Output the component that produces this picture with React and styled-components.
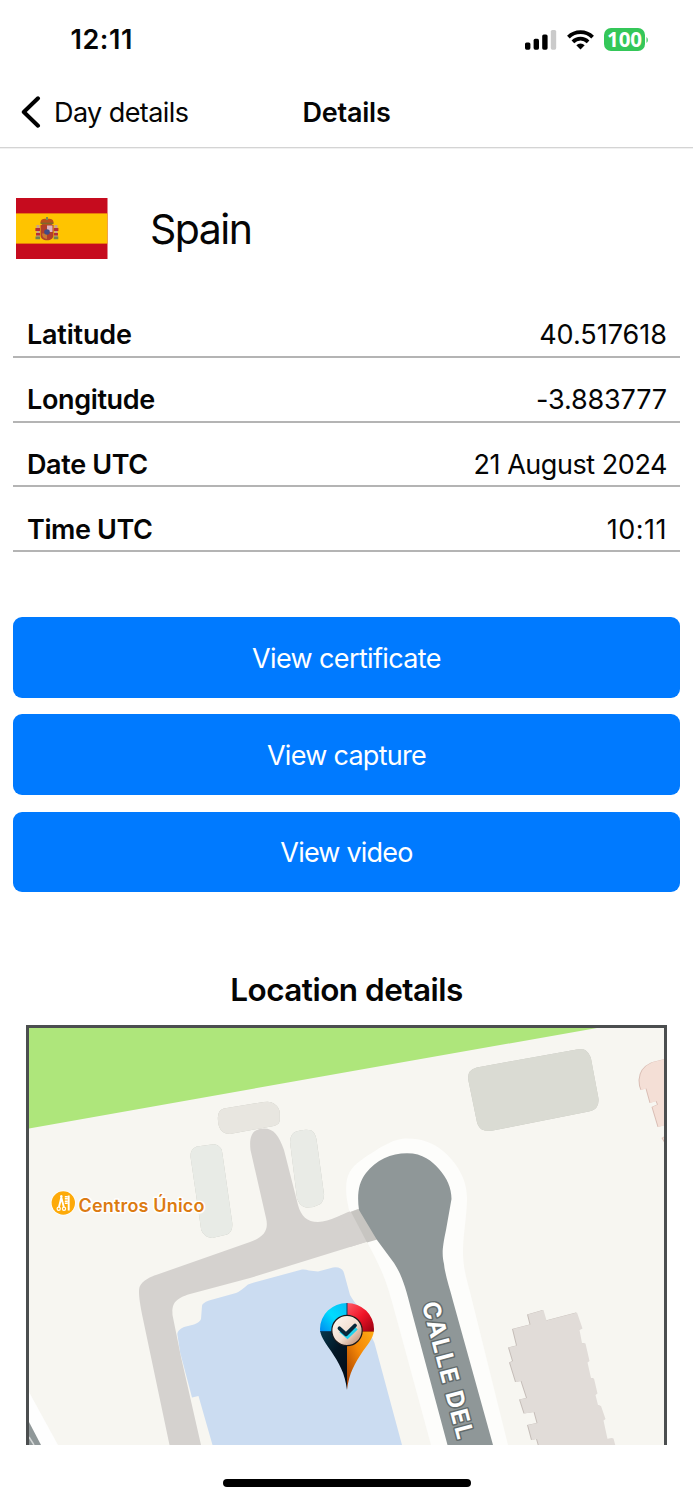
import React from 'react';
import styled, { createGlobalStyle } from 'styled-components';

const GlobalStyle = createGlobalStyle`
  body {
    margin: 0;
    background: #fff;
  }
`;

const Screen = styled.main`
  display: flex;
  flex-direction: column;
  width: 693px;
  height: 1500px;
  overflow: hidden;
  background: #fff;
  color: #050505;
  font-family: Inter, 'Liberation Sans', sans-serif;
  font-size: 27px;
  box-sizing: border-box;
`;

const StatusBar = styled.div`
  display: flex;
  flex: none;
  justify-content: space-between;
  align-items: center;
  height: 79px;
  padding: 0 44px 0 70.5px;
  box-sizing: border-box;
`;

const Clock = styled.span`
  font-weight: 600;
  font-size: 27px;
  letter-spacing: ${({ $tracking }) => $tracking}px;
`;

const StatusIcons = styled.div`
  display: flex;
  align-items: center;
  gap: 10px;
`;

const Battery = styled.div`
  display: flex;
  align-items: center;
  gap: 1px;
`;

const BatteryLevel = styled.span`
  width: 41px;
  height: 23px;
  border-radius: 7px;
  background: #34c759;
  color: #fff;
  font-family: 'Open Sans', sans-serif;
  font-size: 20.5px;
  font-weight: 700;
  line-height: 22px;
  text-align: center;
`;

const NavBar = styled.nav`
  display: grid;
  flex: none;
  grid-template-columns: 1fr auto 1fr;
  align-items: center;
  height: 69px;
  padding: 1px 21px 3px;
  border-bottom: 1px solid #d4d4d4;
  box-shadow: 0 1px #f1f1f1;
  box-sizing: border-box;
`;

const BackButton = styled.button`
  display: flex;
  align-items: center;
  gap: 13px;
  padding: 0;
  border: 0;
  background: none;
  color: inherit;
  font: inherit;
  letter-spacing: ${({ $tracking }) => $tracking}px;
`;

const NavTitle = styled.h1`
  margin: 0;
  font-size: 27px;
  font-weight: 600;
  letter-spacing: ${({ $tracking }) => $tracking}px;
`;

const CountryRow = styled.section`
  display: flex;
  flex: none;
  align-items: center;
  gap: 42px;
  height: 61px;
  padding: 50px 16px 0;
`;

const CountryName = styled.span`
  font-size: 41px;
  letter-spacing: ${({ $tracking }) => $tracking}px;
`;

const DataList = styled.dl`
  flex: none;
  margin: 34px 13px 0;
`;

const DataRow = styled.div`
  display: flex;
  justify-content: space-between;
  align-items: flex-end;
  height: 64.8px;
  padding: 0 13px 3.6px 14px;
  border-bottom: 2px solid #b4b4b4;
  box-sizing: border-box;
  line-height: 34px;
`;

const Label = styled.dt`
  font-weight: 600;
  letter-spacing: ${({ $tracking }) => $tracking}px;
`;

const Value = styled.dd`
  margin: 0;
  letter-spacing: ${({ $tracking }) => $tracking}px;
`;

const Actions = styled.section`
  display: flex;
  flex: none;
  flex-direction: column;
  gap: 16.4px;
  margin: 65px 13px 0;
`;

const ActionButton = styled.button`
  height: 80.8px;
  padding: 2px 0 0;
  border: 0;
  border-radius: 9px;
  background: #007aff;
  color: #fff;
  font: inherit;
  letter-spacing: ${({ $tracking }) => $tracking}px;
`;

const SectionTitle = styled.h2`
  flex: none;
  margin: 78px 0 16px;
  font-size: 31.5px;
  font-weight: 600;
  line-height: 39px;
  letter-spacing: ${({ $tracking }) => $tracking}px;
  text-align: center;
`;

const MapFrame = styled.section`
  flex: none;
  height: 420px;
  margin: 0 26px;
  border: 3px solid #4b4e4f;
  border-bottom: 0;
  box-sizing: border-box;
  overflow: hidden;

  > svg {
    display: block;
  }
`;

const Plots = styled.g`
  filter: drop-shadow(${({ $x }) => $x}px 0.8px 0 ${({ $shade }) => $shade});
`;

const HomeIndicator = styled.div`
  flex: none;
  width: 248px;
  height: 8px;
  margin: 34px auto 0;
  border-radius: 4px;
  background: #000;
`;

const rows = [
  { label: 'Latitude', value: '40.517618', labelTracking: -0.2, valueTracking: 0 },
  { label: 'Longitude', value: '-3.883777', labelTracking: -0.36, valueTracking: -0.15 },
  { label: 'Date UTC', value: '21 August 2024', labelTracking: -0.38, valueTracking: -0.45 },
  { label: 'Time UTC', value: '10:11', labelTracking: -0.4, valueTracking: 0.5 },
];

const actions = [
  { text: 'View certificate', tracking: -0.63 },
  { text: 'View capture', tracking: -0.72 },
  { text: 'View video', tracking: -0.8 },
];

const SignalIcon = () => (
  <svg width="32" height="20" viewBox="0 0 32 20">
    <rect x="0" y="12.5" width="5.4" height="7.2" rx="1.6" />
    <rect x="8.6" y="8.8" width="5.4" height="10.9" rx="1.6" />
    <rect x="17.2" y="4.4" width="5.4" height="15.3" rx="1.6" />
    <rect x="25.8" y="0" width="5.4" height="19.7" rx="1.6" fill="#cacaca" />
  </svg>
);

const WifiIcon = () => (
  <svg width="27" height="20" viewBox="0 0 27 20">
    <g fill="none" stroke="#000" strokeWidth="3.8">
      <path d="M1.4 7.1a17.2 17.2 0 0 1 24.2 0" />
      <path d="M5.9 11.8a10.8 10.8 0 0 1 15.2 0" />
    </g>
    <path d="M9.3 15.3a6.1 6.1 0 0 1 8.4 0l-4.2 4.3z" />
  </svg>
);

const BackIcon = () => (
  <svg width="20" height="32" viewBox="0 0 20 32">
    <path
      d="M17 2.3 2.8 16 17 29.7"
      fill="none"
      stroke="#000"
      strokeWidth="4"
      strokeLinecap="round"
      strokeLinejoin="round"
    />
  </svg>
);

const SpainFlag = () => (
  <svg width="92" height="61" viewBox="0 0 92 61">
    <rect width="91.5" height="61" fill="#c60b1e" />
    <rect y="15.4" width="91.5" height="30.2" fill="#ffc400" />
    {/* coat of arms */}
    <path d="M24.500 24.500c0-3.500 3-3.800 6.500-3.800s6.500.3 6.500 3.800l-2 3h-9z" fill="#b8501e" />
    <path d="M30 19h2v3h-2z" fill="#7b8a55" />
    <path d="M20.500 27h3v13h-3zM38.500 27h3v13h-3z" fill="#c9a08c" />
    <path d="M19.400 30h4.600v3h-4.600zM20 35h4v2.500h-4zM37.800 30h4.600v3h-4.600zM38 35h4v2.500h-4z" fill="#b52f35" />
    <path d="M19.500 38.500h4.600v2.800h-4.600zM37.700 38.500h4.600v2.800h-4.600z" fill="#75824c" />
    <path d="M24.500 27h13v10c0 3.500-2.800 5.300-6.500 5.300s-6.500-1.800-6.500-5.300z" fill="#b23f2a" />
    <path d="M31 27.500h5.500v6.500H31z" fill="#dcb3bd" />
    <path d="M26 35.500h5V41c-3-.3-5-2-5-5.500z" fill="#c9782f" />
    <circle cx="31" cy="34" r="2.800" fill="#424b85" />
    <path d="M24.500 24.600h13v1.500h-13z" fill="#7f6a29" />
  </svg>
);

const MapPin = () => (
  <g>
    <defs>
      <clipPath id="pinShape">
        <path d="M347 1390c-2-17-8-27-16-39-7-10-11-16-11-22a27 26 0 0 1 54 0c0 7-4 13-11 22-8 12-14 22-16 39z" />
      </clipPath>
      <linearGradient id="pinCyan" x1="0" y1="1" x2="1" y2="0">
        <stop offset="0" stopColor="#0089ef" />
        <stop offset="0.5" stopColor="#00dcff" />
        <stop offset="1" stopColor="#08bdf4" />
      </linearGradient>
      <linearGradient id="pinRed" x1="0" y1="0" x2="1" y2="1">
        <stop offset="0" stopColor="#ff5b68" />
        <stop offset="0.5" stopColor="#f01428" />
        <stop offset="1" stopColor="#970010" />
      </linearGradient>
      <linearGradient id="pinOrange" x1="1" y1="0" x2="0" y2="1">
        <stop offset="0" stopColor="#ffad16" />
        <stop offset="0.45" stopColor="#f48706" />
        <stop offset="1" stopColor="#9b3600" />
      </linearGradient>
      <linearGradient id="pinNavy" x1="0" y1="0" x2="0.6" y2="1">
        <stop offset="0" stopColor="#06384d" />
        <stop offset="0.5" stopColor="#021625" />
        <stop offset="1" stopColor="#020d18" />
      </linearGradient>
      <linearGradient id="pinFace" x1="0" y1="0" x2="1" y2="1">
        <stop offset="0" stopColor="#fffaf4" />
        <stop offset="0.55" stopColor="#f2ded0" />
        <stop offset="1" stopColor="#b57c5c" />
      </linearGradient>
    </defs>
    <g clipPath="url(#pinShape)">
      <path d="M320 1303h27v28.500h-27z" fill="url(#pinCyan)" />
      <path d="M347 1303h27v28.500h-27z" fill="url(#pinRed)" />
      <path d="M320 1331.500h27v59h-27z" fill="url(#pinNavy)" />
      <path d="M347 1331.500h27v59h-27z" fill="url(#pinOrange)" />
      <path d="M320 1331.500h27M347 1303v28" stroke="#064069" strokeWidth="1" />
      <path d="M347 1331.500h27" stroke="#b8490a" strokeWidth="1" />
    </g>
    <circle cx="347" cy="1330.500" r="15.200" fill="url(#pinFace)" stroke="#1c1a1c" strokeWidth="1.200" />
    <path d="M340.500 1331l7 5.800 9-8.500" fill="none" stroke="#20d4ee" strokeWidth="3.500" />
    <path
      d="M339.500 1328.300l6.500 6 9-8.800"
      fill="none"
      stroke="#07283a"
      strokeWidth="3.800"
      strokeLinecap="round"
      strokeLinejoin="round"
    />
  </g>
);

const SalonIcon = () => (
  <g>
    <circle cx="63.300" cy="1203" r="12.500" fill="#fff" />
    <circle cx="63.300" cy="1203" r="11.700" fill="#fdaa09" />
    <g fill="none" stroke="#fff">
      <path d="M61.800 1195.500 59 1207M60.800 1195.500l3 11.500" strokeWidth="1.900" />
      <circle cx="58.700" cy="1208.700" r="1.600" strokeWidth="1.200" />
      <circle cx="64" cy="1208.700" r="1.600" strokeWidth="1.200" />
      <path d="M68.700 1195.500v15" strokeWidth="1.900" />
      <path d="M66.300 1196v8" strokeWidth="3" strokeDasharray="1.200 .5" />
    </g>
  </g>
);

const LocationMap = () => (
  <svg width="635" height="417" viewBox="29 1028 635 417" fontFamily="Inter, sans-serif">
    <path d="M29 1028h635v417H29z" fill="#f7f6f1" />
    <path d="M29 1028v100.500L350 1071.500 597 1028z" fill="#aee67b" />

    {/* small plots */}
    <Plots $x={0.5} $shade="#c3c3bb">
      <path d="M217.800 1118q0-8 6-9.500l40-6.500q7-1 10 1.500 6 4 6 10v6q0 5-6 6.500l-44 8q-4 0-7-2-5-4-5-14z" fill="#e8e6e0" />
      <path d="M190.700 1158q-1-9 6-11.500l15-2q6-1 10 5l1 6 9.500 67q1 9-5 12l-15 3.500q-8-.5-11-8z" fill="#e8ebe6" />
      <path d="M290 1142q0-8 6-10.500 9-3 15-1.200 4 2 5.500 9l7.500 55q0 7-4 10-7 4-15 3-6-2-8-9z" fill="#e9ebe6" />
      <path d="M468.300 1080q-.5-6 1.500-8.500t7-4l100-18q7-1 9 1 3 2 5 7l7.500 40q1 5-1.500 9.500-2 3-8 4.500l-96 19q-7 1-11-1-4-3-5-8z" fill="#dadbd3" />
    </Plots>
    <Plots $x={-0.6} $shade="#d9bdb4">
      <path
        d="M666 1059Q656 1061 652 1062.500 640 1068 639.500 1080 639.500 1086 641.500 1090L646.500 1088.500 650.500 1103 656.500 1101 658 1104.500 652.500 1107 658.500 1127 666 1125z"
        fill="#f4dfd6"
      />
      <path d="M666 1136v8l-3.500-6z" fill="#f4dfd6" />
    </Plots>

    {/* parking lane */}
    <path
      d="M250.500 1150C249 1137 252 1128.500 264 1128.500 274 1128.500 279 1136 284 1150L298 1205C301 1216 307 1222 318 1222 330 1222 342 1213 360 1208L379 1238 350 1247 250 1278 190 1294C174 1299 172 1304 172.500 1315L181 1357 201 1445H169.500L143 1319C139 1299 138 1290 140 1286 142 1281 152 1276 156 1275L250 1242C264 1237 269 1230 266 1218Z"
      fill="#d5d2cf"
    />

    {/* street casing */}
    <path
      d="M347 1200C344 1178 349 1169 360 1161 383 1145 395 1138.600 407 1138.600 422 1138.600 433 1143 443 1151 456 1162 467 1178 467 1198 467 1215 463 1235 463 1251 463 1267 466 1277 470 1292L508 1445H431L397 1320C388 1287 386 1277 367 1242L349 1210Z"
      fill="#fdfdfb"
    />
    <path d="M340 1216q12-5 18-7l21 29-29 9z" fill="#d5d2cf" />
    <path d="M351 1212l8-3 20 30-12 3.500z" fill="#c7c5c1" />
    <path
      d="M359 1210C357 1196 358 1183 366 1173 376 1160 391 1153.200 407 1153.200 423 1153.200 432 1161 439 1169 447 1178 451.500 1188 451.500 1199L446 1230C442 1249 442 1255 444 1264 445 1275 450 1289 453 1301L493 1445H447.500L411 1309C406 1289 402 1275 394 1263L377 1240Z"
      fill="#8f9798"
    />

    <path
      d="M177.300 1334Q177.500 1330 184 1327L194 1324.500Q200 1322 201 1319L202 1306Q202 1303 209 1300.500L236 1293Q240 1291.500 248 1284.500L254 1282.500 302 1269.500Q305 1269 309 1270.500L318 1271.500 333 1267.500Q342 1266.500 344 1273L350 1295Q354 1302 357 1305L374.500 1343 402 1445H212.500L198.500 1396 192 1397.500 180 1352Z"
      fill="#cbdcf1"
    />

    <Plots $x={-0.8} $shade="#c4bcb7">
      <path
        d="M528 1314.500L543.500 1310 546.500 1320.500 577 1312.500 582.500 1328.500 579.500 1330 582 1343 585.500 1343.500 589.500 1361 587.500 1362.500 591 1378 594 1378.500 597.500 1393.500 595.500 1395 598 1405 601 1406 605.500 1419 603.500 1420.500 607.500 1439 613.500 1438.500 615.500 1446H539L537 1439 532 1440 528 1425 537.500 1423 534.500 1412 524.500 1413.500 520 1399.500 527 1398 521.500 1381 516 1382 510 1362.500 513 1361 509 1347.500 517 1345.500 513 1329 530.500 1324.500Z"
        fill="#e1dcd8"
      />
    </Plots>

    <path d="M29 1392 58 1445H29z" fill="#fefefe" />
    <path d="M29 1422 41 1445H29z" fill="#8f9798" />
    <path d="M29 1437 34 1445" stroke="#d4d7d7" strokeWidth="1.500" />

    <text
      x="0"
      y="0"
      transform="translate(421.800 1304) rotate(75.300)"
      fill="#fff"
      stroke="#626b6c"
      strokeWidth="3"
      paintOrder="stroke"
      strokeLinejoin="round"
      fontSize="24"
      fontWeight="700"
      textLength="141"
    >
      CALLE DEL
    </text>
    <SalonIcon />
    <text
      x="78.500"
      y="1211.500"
      fill="#dc7b12"
      stroke="#fff"
      strokeWidth="3"
      paintOrder="stroke"
      strokeLinejoin="round"
      fontSize="18"
      fontWeight="600"
      textLength="126"
    >
      Centros Único
    </text>
    <MapPin />
  </svg>
);

export default function App() {
  return (
    <>
      <GlobalStyle />
      <Screen>
        <StatusBar>
          <Clock $tracking={0.55}>12:11</Clock>
          <StatusIcons>
            <SignalIcon />
            <WifiIcon />
            <Battery>
              <BatteryLevel>100</BatteryLevel>
              <svg width="3" height="8" viewBox="0 0 3 8">
                <path d="M.5 1a4 4 0 0 1 0 6z" fill="#34c759" />
              </svg>
            </Battery>
          </StatusIcons>
        </StatusBar>
        <NavBar>
          <BackButton $tracking={-0.58}>
            <BackIcon />
            Day details
          </BackButton>
          <NavTitle $tracking={-0.22}>Details</NavTitle>
        </NavBar>
        <CountryRow>
          <SpainFlag />
          <CountryName $tracking={-1.5}>Spain</CountryName>
        </CountryRow>
        <DataList>
          {rows.map(row => (
            <DataRow key={row.label}>
              <Label $tracking={row.labelTracking}>{row.label}</Label>
              <Value $tracking={row.valueTracking}>{row.value}</Value>
            </DataRow>
          ))}
        </DataList>
        <Actions>
          {actions.map(action => (
            <ActionButton key={action.text} $tracking={action.tracking}>
              {action.text}
            </ActionButton>
          ))}
        </Actions>
        <SectionTitle $tracking={-0.52}>Location details</SectionTitle>
        <MapFrame>
          <LocationMap />
        </MapFrame>
        <HomeIndicator />
      </Screen>
    </>
  );
}
